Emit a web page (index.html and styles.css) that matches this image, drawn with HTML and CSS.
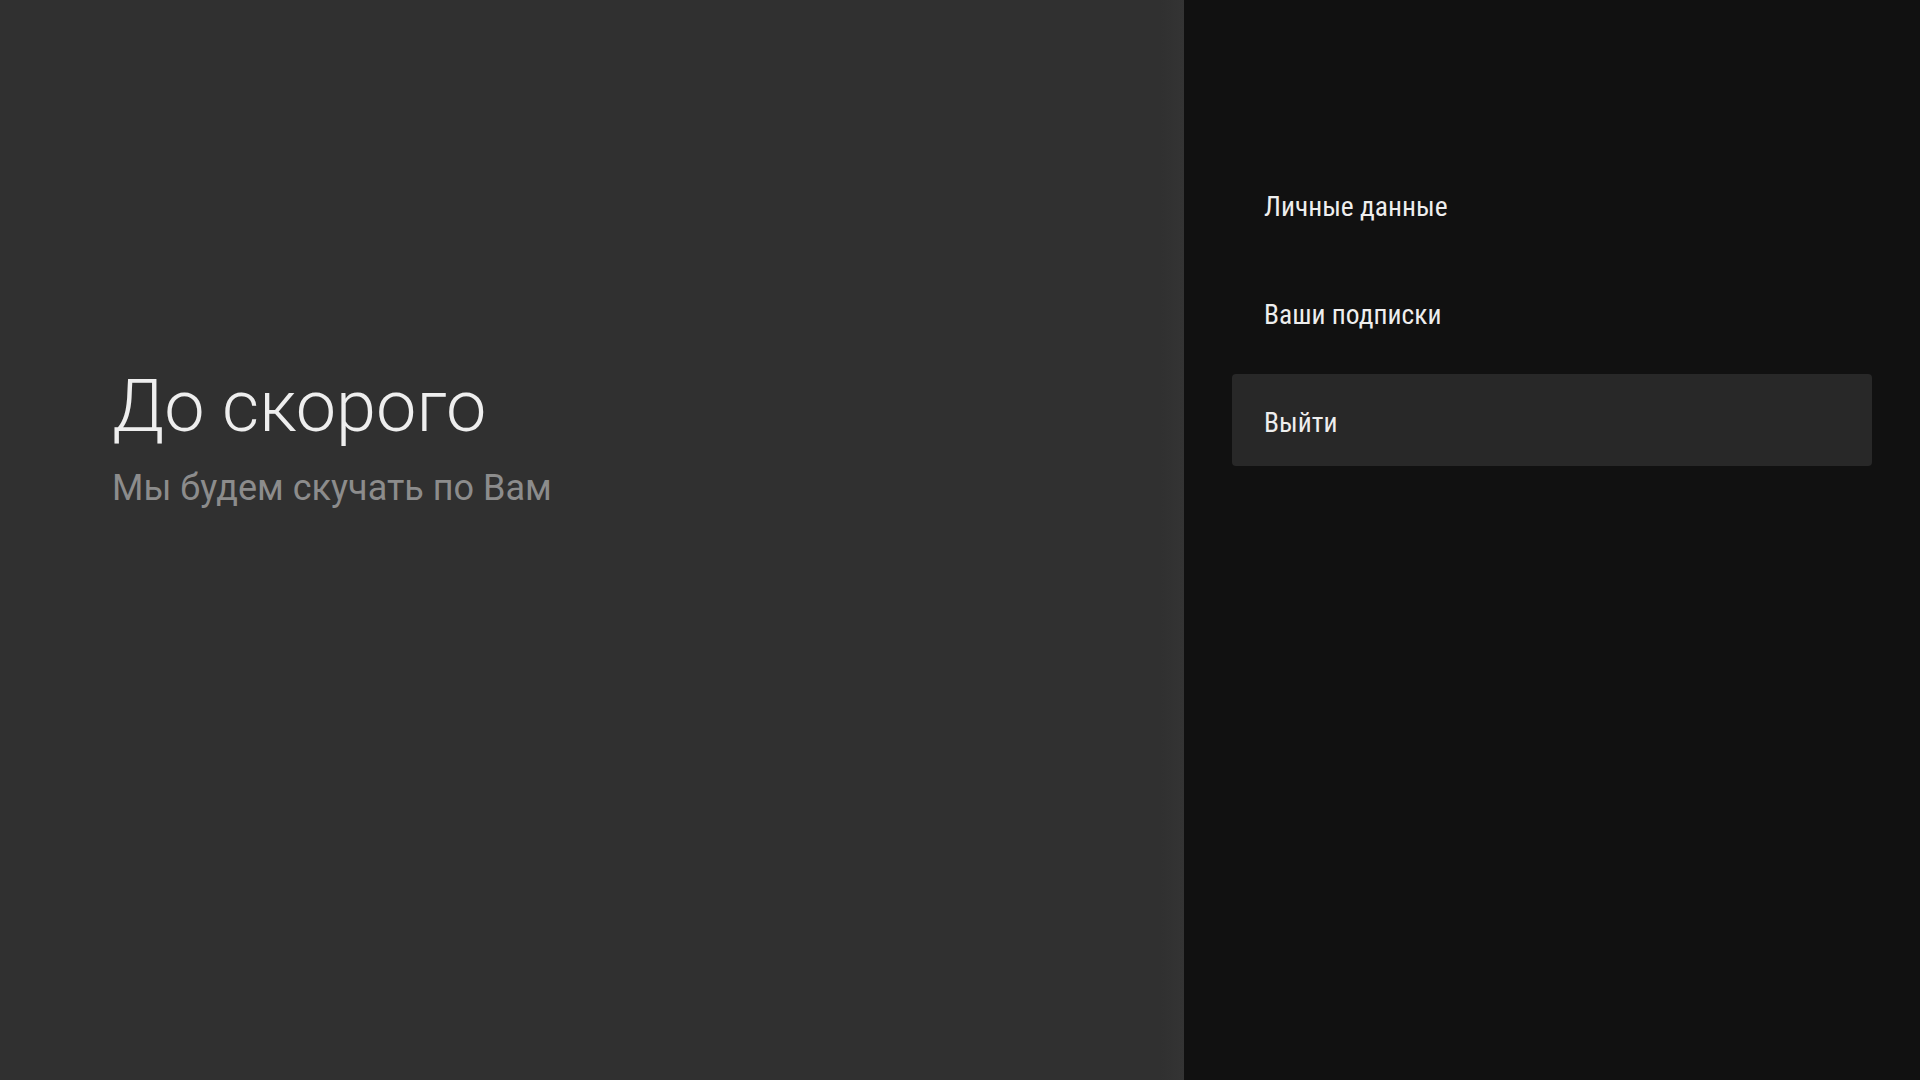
FILE: index.html
```html
<!DOCTYPE html>
<html lang="ru">
<head>
<meta charset="utf-8">
<link rel="stylesheet" href="styles.css">
</head>
<body>
<div class="screen">
  <section class="guidance">
    <h1 class="title">До скорого</h1>
    <p class="subtitle">Мы будем скучать по Вам</p>
  </section>
  <aside class="actions">
    <ul class="menu">
      <li class="item">Личные данные</li>
      <li class="item">Ваши подписки</li>
      <li class="item selected">Выйти</li>
    </ul>
  </aside>
</div>
</body>
</html>
```
FILE: styles.css
```css
html, body {
  margin: 0;
  padding: 0;
  width: 1920px;
  height: 1080px;
  overflow: hidden;
  background: #111111;
  font-family: Roboto, "Noto Sans", sans-serif;
}
.screen {
  display: flex;
  width: 1920px;
  height: 1080px;
}
.guidance {
  width: 1184px;
  flex: none;
  background: linear-gradient(to right, #303030 0, #303030 1160px, #343434 1184px);
  display: flex;
  flex-direction: column;
  padding-top: 365px;
  padding-left: 112px;
  box-sizing: border-box;
}
.title {
  margin: 0;
  font-weight: 300;
  font-size: 72px;
  line-height: 84px;
  color: #eeeeee;
}
.subtitle {
  margin: 17px 0 0;
  font-weight: 400;
  font-size: 36px;
  line-height: 44px;
  color: #8c8c8c;
}
.actions {
  flex: 1;
  background: #111111;
  padding: 158px 48px 0 48px;
  box-sizing: border-box;
}
.menu {
  list-style: none;
  margin: 0;
  padding: 0;
  display: flex;
  flex-direction: column;
  gap: 16px;
}
.item {
  height: 92px;
  box-sizing: border-box;
  display: flex;
  align-items: center;
  padding-left: 32px;
  padding-top: 4px;
  border-radius: 4px;
  font-size: 27.5px;
  color: #eeeeee;
  font-stretch: condensed;
}
.selected {
  background: #282828;
}
```
